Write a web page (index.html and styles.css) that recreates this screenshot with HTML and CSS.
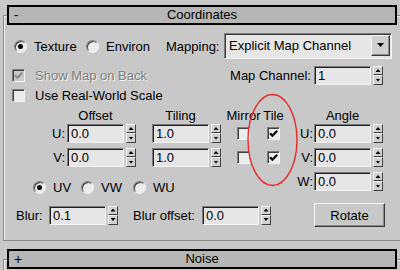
FILE: index.html
```html
<!DOCTYPE html>
<html>
<head>
<meta charset="utf-8">
<link rel="stylesheet" href="styles.css">
</head>
<body>
<div class="rollout coords">
  <div class="rtitle"><span class="toggle">-</span><span class="rname">Coordinates</span><span></span></div>

  <div class="row r1">
    <div class="ropt o1"><span class="radio on"></span><span class="lbl">Texture</span></div>
    <div class="ropt o2"><span class="radio"></span><span class="lbl">Environ</span></div>
    <span class="maplbl">Mapping:</span>
    <div class="combo">
      <span class="combo-text">Explicit Map Channel</span>
      <span class="cbtn"><i></i></span>
    </div>
  </div>

  <div class="row r2">
    <div class="copt c1 disabled"><span class="check off-bg"><svg width="11" height="11" viewBox="0 0 11 11"><path d="M2 5.2 L4.4 7.8 L9.2 2.8" fill="none" stroke="#8a8a8a" stroke-width="2"/></svg></span><span class="lbl">Show Map on Back</span></div>
    <span class="mclbl">Map Channel:</span>
    <div class="spin"><span class="field">1</span><span class="sb"><i class="up"></i><i class="dn"></i></span></div>
  </div>

  <div class="row r3">
    <div class="copt c1"><span class="check"></span><span class="lbl">Use Real-World Scale</span></div>
  </div>

  <div class="uvw">
    <div class="lcol">
      <div class="grow heads">
        <span class="c-lbl"></span>
        <span class="c-fld"><span class="hd">Offset</span></span>
        <span class="c-fld g"><span class="hd">Tiling</span></span>
        <span class="c-chk m"><span class="hdc">Mirror</span></span>
        <span class="c-chk t"><span class="hdc">Tile</span></span>
      </div>
      <div class="grow frow">
        <span class="c-lbl">U:</span>
        <div class="spin"><span class="field">0.0</span><span class="sb"><i class="up"></i><i class="dn"></i></span></div>
        <div class="spin g"><span class="field">1.0</span><span class="sb"><i class="up"></i><i class="dn"></i></span></div>
        <span class="c-chk m"><span class="check"></span></span>
        <span class="c-chk t"><span class="check"><svg width="11" height="11" viewBox="0 0 11 11"><path d="M2 5.2 L4.4 7.8 L9.2 2.8" fill="none" stroke="#000" stroke-width="2"/></svg></span></span>
      </div>
      <div class="grow frow f2">
        <span class="c-lbl">V:</span>
        <div class="spin"><span class="field">0.0</span><span class="sb"><i class="up"></i><i class="dn"></i></span></div>
        <div class="spin g"><span class="field">1.0</span><span class="sb"><i class="up"></i><i class="dn"></i></span></div>
        <span class="c-chk m"><span class="check"></span></span>
        <span class="c-chk t"><span class="check"><svg width="11" height="11" viewBox="0 0 11 11"><path d="M2 5.2 L4.4 7.8 L9.2 2.8" fill="none" stroke="#000" stroke-width="2"/></svg></span></span>
      </div>
      <div class="axes">
        <div class="ax a1"><span class="radio on"></span><span class="lbl">UV</span></div>
        <div class="ax a2"><span class="radio"></span><span class="lbl">VW</span></div>
        <div class="ax a3"><span class="radio"></span><span class="lbl">WU</span></div>
      </div>
    </div>
    <div class="rcol">
      <div class="grow heads">
        <span class="r-lbl"></span>
        <span class="c-fld"><span class="hd">Angle</span></span>
      </div>
      <div class="grow frow">
        <span class="r-lbl">U:</span>
        <div class="spin"><span class="field">0.0</span><span class="sb"><i class="up"></i><i class="dn"></i></span></div>
      </div>
      <div class="grow frow f2">
        <span class="r-lbl">V:</span>
        <div class="spin"><span class="field">0.0</span><span class="sb"><i class="up"></i><i class="dn"></i></span></div>
      </div>
      <div class="grow frow f2">
        <span class="r-lbl">W:</span>
        <div class="spin"><span class="field">0.0</span><span class="sb"><i class="up"></i><i class="dn"></i></span></div>
      </div>
    </div>
  </div>

  <div class="row blur">
    <span class="blbl">Blur:</span>
    <div class="spin"><span class="field">0.1</span><span class="sb"><i class="up"></i><i class="dn"></i></span></div>
    <span class="bolbl">Blur offset:</span>
    <div class="spin"><span class="field">0.0</span><span class="sb"><i class="up"></i><i class="dn"></i></span></div>
    <span class="btn">Rotate</span>
  </div>
</div>

<div class="rollout noise">
  <div class="rtitle"><span class="toggle plus">+</span><span class="rname">Noise</span><span></span></div>
</div>

<svg class="mark" width="54" height="96" viewBox="0 0 54 96"><ellipse cx="26.5" cy="47" rx="24.5" ry="45.5" fill="none" stroke="#e62a2a" stroke-width="1.4"/></svg>
</body>
</html>
```
FILE: styles.css
```css
* { box-sizing: border-box; }
html, body { margin: 0; padding: 0; }
body {
  width: 400px;
  height: 270px;
  overflow: hidden;
  position: relative;
  background: #c8c8c8;
  font-family: "Liberation Sans", Arial, sans-serif;
  font-size: 13px;
  color: #000;
}

.rollout {
  margin-left: 3px;
  width: 397px;
  border-top: 1px solid #8a8a8a;
  border-left: 1px solid #8a8a8a;
  box-shadow: inset 1px 1px 0 #ececec;
}
.coords {
  margin-top: 15px;
  padding-bottom: 13px;
  border-bottom: 1px solid #8a8a8a;
}
.noise {
  margin-top: 18px;
  height: 14px;
}

.rtitle {
  margin-top: -11px;
  margin-left: 3px;
  width: 390px;
  height: 20px;
  border: 2px solid #000;
  background: #b6b6b6;
  display: grid;
  grid-template-columns: 1fr auto 1fr;
  align-items: center;
  line-height: 16px;
}
.toggle { padding-left: 5px; }
.toggle.plus { padding-left: 5px; font-size: 14px; }

.row { display: flex; align-items: center; }
.r1 { margin-top: 8px; height: 26px; }
.r2 { margin-top: 7px; height: 19px; }
.r3 { margin-top: 3px; height: 15px; }

.ropt, .copt, .ax { display: flex; align-items: center; }
.o1 { margin-left: 10px; width: 72px; }
.o2 { width: 80px; }
.ropt .lbl { margin-left: 7px; }
.maplbl { width: 58px; }

.radio {
  flex: none;
  position: relative;
  width: 13px;
  height: 13px;
  border-radius: 50%;
  background: #ececec;
  border: 1px solid;
  border-color: #7c7c7c #f4f4f4 #f4f4f4 #7c7c7c;
  box-shadow: inset 1px 1px 0 #404040;
}
.radio.on::after {
  content: "";
  position: absolute;
  left: 3px;
  top: 3px;
  width: 5px;
  height: 5px;
  border-radius: 50%;
  background: #000;
}

.combo {
  width: 168px;
  height: 26px;
  border: 1px solid;
  border-color: #7c7c7c #f4f4f4 #f4f4f4 #7c7c7c;
  box-shadow: inset 1px 1px 0 #3a3a3a;
  background: #e6e6e6;
  display: flex;
  align-items: center;
  padding: 1px 1px 3px 0;
}
.combo-text { padding-left: 4px; }
.cbtn {
  margin-left: auto;
  width: 19px;
  height: 21px;
  background: #d0d0d0;
  border: 1px solid;
  border-color: #f6f6f6 #3a3a3a #3a3a3a #f6f6f6;
  box-shadow: inset -1px -1px 0 #8a8a8a;
  display: flex;
  align-items: center;
  justify-content: center;
}
.cbtn i {
  width: 7px;
  height: 4px;
  background: #000;
  clip-path: polygon(0 0, 100% 0, 50% 100%);
}

.check {
  flex: none;
  width: 13px;
  height: 13px;
  border: 1px solid;
  border-color: #7c7c7c #f4f4f4 #f4f4f4 #7c7c7c;
  box-shadow: inset 1px 1px 0 #404040;
  background: #ececec;
  display: flex;
}
.check svg { display: block; }
.check.off-bg { background: #c8c8c8; }
.c1 { margin-left: 8px; width: 200px; }
.copt .lbl { margin-left: 10px; }
.disabled .lbl { color: #808080; text-shadow: 1px 1px 0 #f0f0f0; }
.mclbl { width: 99px; text-align: right; }
.r2 .spin { margin-left: 3px; }

.spin { display: flex; align-items: center; height: 19px; flex: none; }
.field {
  width: 57px;
  height: 19px;
  border: 1px solid;
  border-color: #7c7c7c #f4f4f4 #f4f4f4 #7c7c7c;
  box-shadow: inset 1px 1px 0 #202020;
  background: #e6e6e6;
  padding-left: 3px;
  line-height: 17px;
}
.sb {
  margin-left: 2px;
  width: 10px;
  height: 19px;
  display: grid;
  grid-template-rows: 9px 10px;
}
.sb i {
  background: #d0d0d0;
  border: 1px solid;
  border-color: #f4f4f4 #404040 #404040 #f4f4f4;
  display: flex;
  align-items: center;
  justify-content: center;
}
.sb i::after {
  content: "";
  width: 5px;
  height: 3px;
  background: #000;
}
.sb .up::after { clip-path: polygon(50% 0, 100% 100%, 0 100%); }
.sb .dn::after { clip-path: polygon(0 0, 100% 0, 50% 100%); }

.uvw { display: flex; margin-top: 5px; }
.lcol { width: 276px; }
.rcol { width: 104px; }
.grow { display: flex; align-items: center; }
.heads { height: 15px; }
.frow { margin-top: 1px; height: 19px; }
.frow.f2 { margin-top: 5px; }
.c-lbl { width: 63px; text-align: right; padding-right: 2px; }
.r-lbl { width: 34px; text-align: right; padding-right: 1px; }
.c-fld { width: 69px; flex: none; }
.hd { display: block; width: 57px; text-align: center; }
.g { margin-left: 16px; }
.c-chk { width: 13px; flex: none; display: flex; justify-content: center; }
.c-chk.m { margin-left: 16px; }
.c-chk.t { margin-left: 17px; }
.hdc { white-space: nowrap; }

.axes { display: flex; margin-top: 13px; height: 14px; align-items: center; }
.ax .lbl { margin-left: 7px; }
.a1 { margin-left: 29px; }
.a2 { margin-left: 10px; }
.a3 { margin-left: 11px; }

.blur { margin-top: 9px; height: 24px; }
.blbl { width: 45px; padding-left: 12px; }
.bolbl { width: 84px; padding-left: 15px; }
.btn {
  margin-left: 43px;
  width: 71px;
  height: 24px;
  border: 1px solid;
  border-color: #f6f6f6 #3a3a3a #3a3a3a #f6f6f6;
  box-shadow: inset -1px -1px 0 #8a8a8a;
  background: #c8c8c8;
  display: flex;
  align-items: center;
  justify-content: center;
}

.mark { position: absolute; left: 246px; top: 93px; }
```
